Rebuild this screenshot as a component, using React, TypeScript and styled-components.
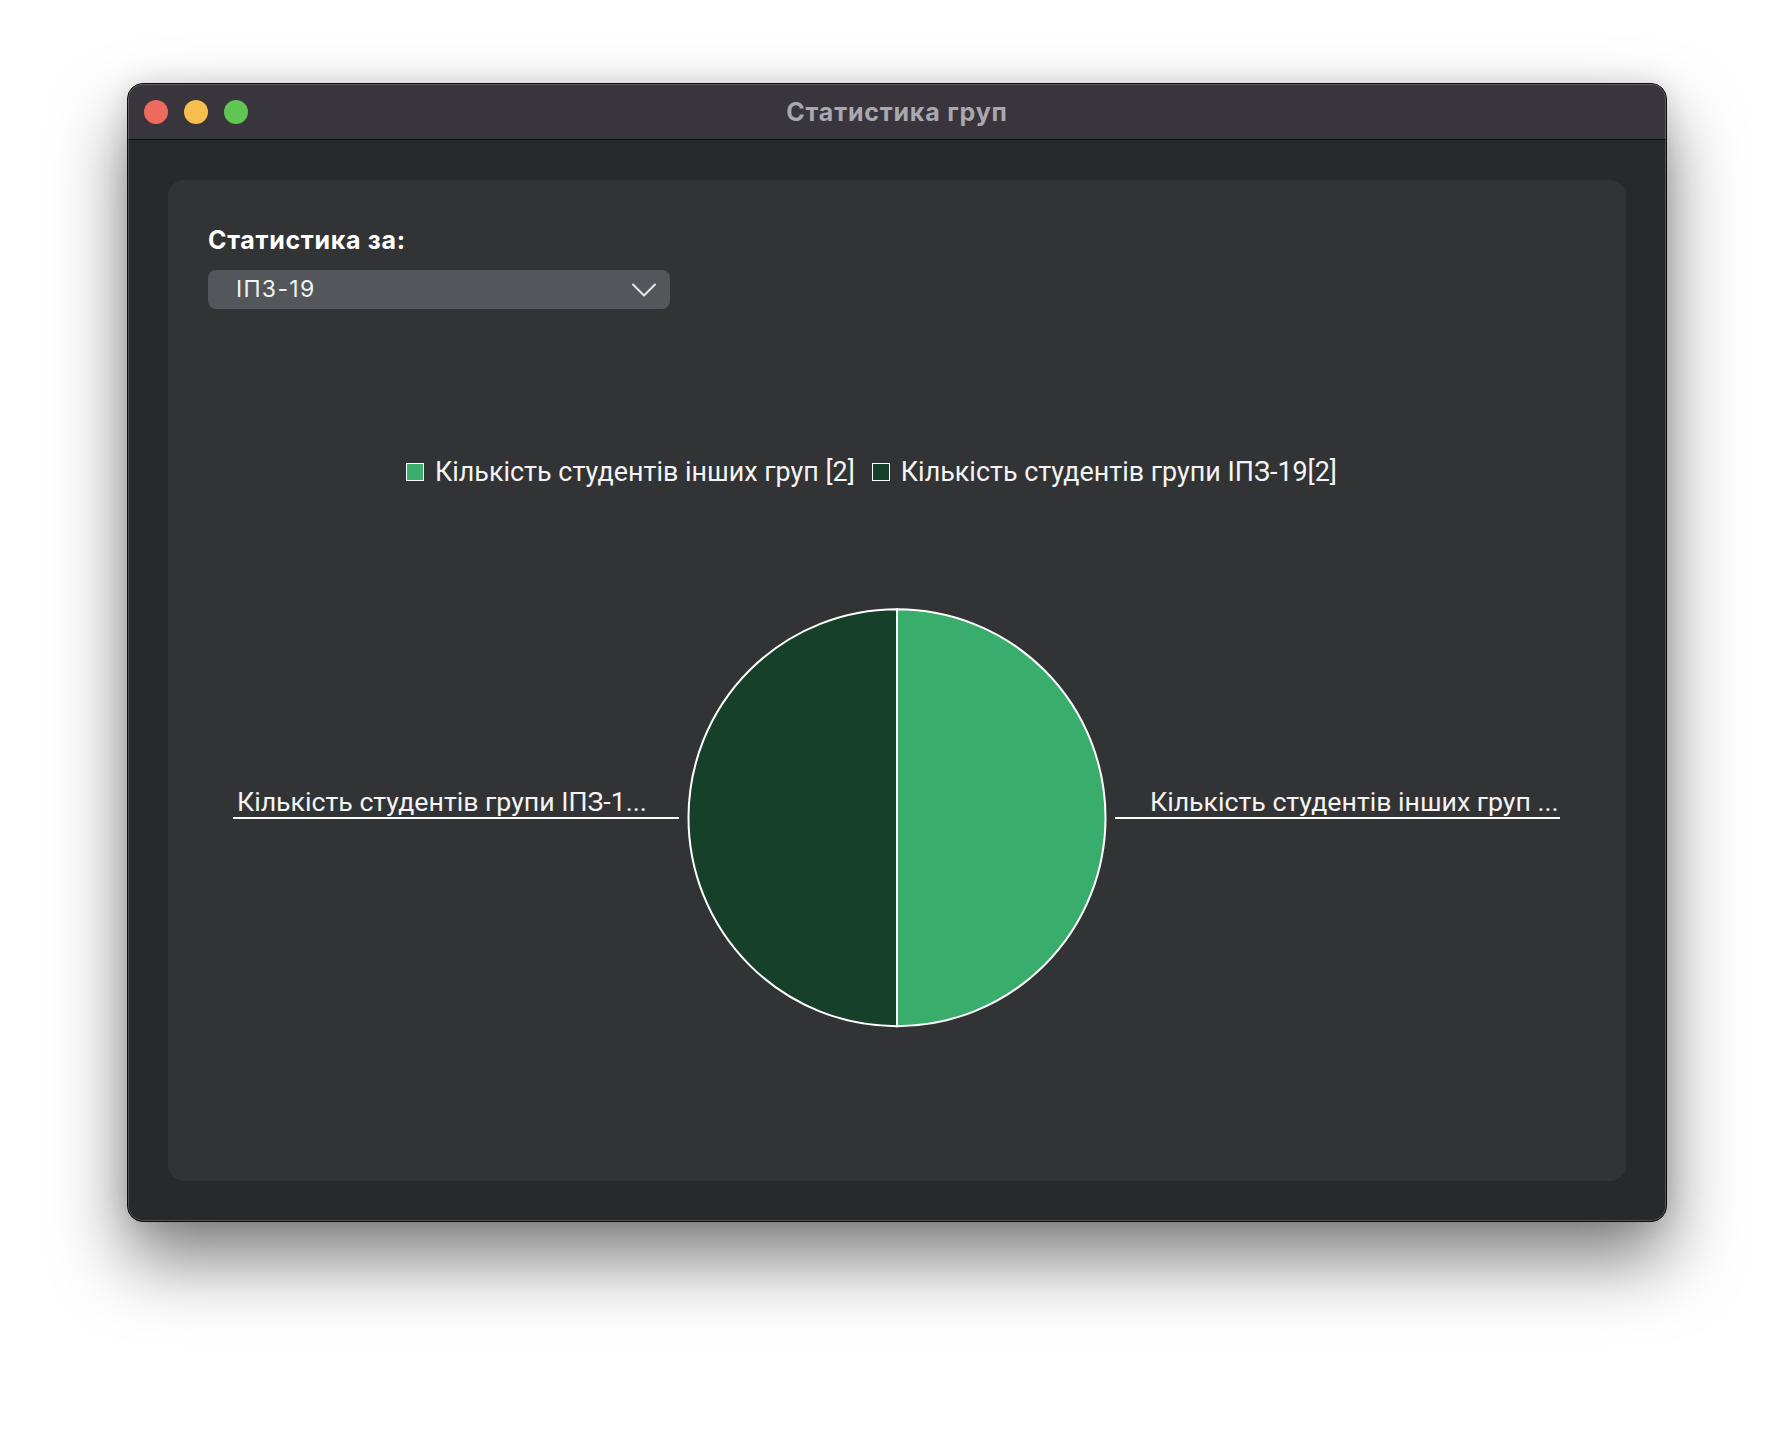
import React from 'react';
import styled, { createGlobalStyle } from 'styled-components';

const Global = createGlobalStyle`
  html, body { margin: 0; padding: 0; background: #ffffff; }
  body { width: 1790px; height: 1442px; overflow: hidden; }
`;

const Page = styled.div`
  padding: 83px 0 0 127px;
`;

const Window = styled.div`
  position: relative;
  width: 1540px;
  height: 1139px;
  box-sizing: border-box;
  border: 1px solid #0c0c0d;
  border-radius: 16px;
  overflow: hidden;
  display: flex;
  flex-direction: column;
  background: #28292b;
  box-shadow: 0 38px 72px rgba(0, 0, 0, 0.5), 0 0 26px rgba(0, 0, 0, 0.12);
  &::after {
    content: '';
    position: absolute;
    inset: 0;
    border-radius: 15px;
    box-shadow: inset 0 0 0 1px rgba(255, 255, 255, 0.2);
    pointer-events: none;
  }
`;

const TitleBar = styled.div`
  flex: none;
  height: 55px;
  display: grid;
  grid-template-columns: 1fr auto 1fr;
  align-items: center;
  padding: 0 16px;
  background: #38363c;
  border-bottom: 1px solid #0f0f10;
`;

const Lights = styled.div`
  display: flex;
  gap: 16px;
`;

const Light = styled.span<{ $c: string }>`
  width: 24px;
  height: 24px;
  border-radius: 50%;
  background: ${(p) => p.$c};
`;

const Title = styled.div`
  font-family: Inter, 'Noto Sans', sans-serif;
  font-weight: 700;
  font-size: 25px;
  letter-spacing: 0.8px;
  color: #a9a7af;
`;

const Content = styled.div`
  flex: 1;
  display: flex;
  padding: 40px;
`;

const Card = styled.div`
  flex: 1;
  display: flex;
  flex-direction: column;
  background: #323335;
  border-radius: 16px;
  padding: 46px 40px 0;
  overflow: hidden;
`;

const Label = styled.div`
  font-family: Inter, 'Noto Sans', sans-serif;
  font-weight: 700;
  font-size: 25px;
  letter-spacing: 0.7px;
  line-height: 29px;
  color: #ffffff;
`;

const Select = styled.div`
  margin-top: 15px;
  width: 462px;
  height: 39px;
  box-sizing: border-box;
  display: flex;
  align-items: center;
  justify-content: space-between;
  padding: 0 14px 2px 28px;
  background: #53565a;
  border-radius: 8px;
  font-family: Inter, 'Noto Sans', sans-serif;
  font-size: 23px;
  letter-spacing: 1.3px;
  color: #f2f2f2;
`;

const Chevron = styled.svg`
  margin-top: 2px;
  flex: none;
`;

const Legend = styled.div`
  margin: 148px 0 0 198px;
  display: flex;
  align-items: center;
  gap: 17px;
  height: 30px;
  font-family: Roboto, 'Liberation Sans', sans-serif;
  font-size: 26.9px;
  line-height: 30px;
  color: #f4f4f4;
`;

const LegendItem = styled.div`
  display: flex;
  align-items: center;
  gap: 11px;
  white-space: nowrap;
`;

const Swatch = styled.span<{ $c: string }>`
  width: 18px;
  height: 18px;
  box-sizing: border-box;
  border: 1.5px solid #ffffff;
  background: ${(p) => p.$c};
`;

const Chart = styled.svg`
  display: block;
  margin: 0 -40px;
  flex: none;
`;

const ChartText = styled.text`
  font-family: Roboto, 'Liberation Sans', sans-serif;
  font-size: 26.7px;
  fill: #f4f4f4;
`;

const LIGHT = '#39ad6b';
const DARK = '#16402a';

export default function App() {
  const cx = 729;
  const cy = 330.7;
  const r = 208.5;
  return (
    <>
      <Global />
      <Page>
        <Window>
          <TitleBar>
            <Lights>
              <Light $c="#ee6a5f" />
              <Light $c="#f5be4f" />
              <Light $c="#61c554" />
            </Lights>
            <Title>Статистика груп</Title>
            <div />
          </TitleBar>
          <Content>
            <Card>
              <Label>Статистика за:</Label>
              <Select>
                <span>ІПЗ-19</span>
                <Chevron width="24" height="14" viewBox="0 0 24 14">
                  <polyline points="1,1.5 12,12.5 23,1.5" fill="none" stroke="#e8e8e8" strokeWidth="2" strokeLinecap="round" strokeLinejoin="round" />
                </Chevron>
              </Select>
              <Legend>
                <LegendItem>
                  <Swatch $c={LIGHT} />
                  Кількість студентів інших груп [2]
                </LegendItem>
                <LegendItem>
                  <Swatch $c={DARK} />
                  Кількість студентів групи ІПЗ-19[2]
                </LegendItem>
              </Legend>
              <Chart width="1458" height="600" viewBox="0 0 1458 600">
                <path d={`M ${cx} ${cy - r} A ${r} ${r} 0 0 1 ${cx} ${cy + r} Z`} fill={LIGHT} stroke="#ffffff" strokeWidth="2" />
                <path d={`M ${cx} ${cy + r} A ${r} ${r} 0 0 1 ${cx} ${cy - r} Z`} fill={DARK} stroke="#ffffff" strokeWidth="2" />
                <line x1="65" y1="331" x2="511" y2="331" stroke="#ffffff" strokeWidth="2" />
                <line x1="947" y1="331" x2="1392" y2="331" stroke="#ffffff" strokeWidth="2" />
                <ChartText x="69" y="324.3">Кількість студентів групи ІПЗ-1...</ChartText>
                <ChartText x="982" y="324.3">Кількість студентів інших груп ...</ChartText>
              </Chart>
            </Card>
          </Content>
        </Window>
      </Page>
    </>
  );
}
